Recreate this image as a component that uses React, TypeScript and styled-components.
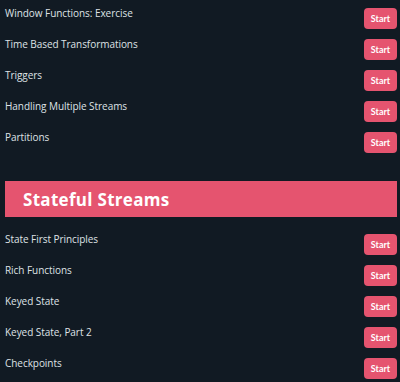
import React from 'react';
import styled, { createGlobalStyle } from 'styled-components';

const GlobalStyle = createGlobalStyle`
  html, body {
    margin: 0;
    padding: 0;
    background: #111a23;
  }
`;

const Page = styled.div`
  width: 400px;
  height: 382px;
  overflow: hidden;
  box-sizing: border-box;
  padding: 0 3px 0 5px;
  background: #111a23;
  font-family: 'Open Sans', 'Noto Sans', sans-serif;
`;

const Row = styled.div`
  display: flex;
  justify-content: space-between;
  align-items: flex-start;
  height: 31px;
`;

const Title = styled.span`
  margin-top: 6px;
  font-size: 10px;
  line-height: 14px;
  color: #dfe2e6;
  letter-spacing: -0.05px;
`;

const StartButton = styled.button`
  margin-top: 8px;
  width: 33px;
  height: 21px;
  padding: 0;
  border: none;
  border-radius: 4px;
  background: #e5546f;
  color: #fff;
  font-family: Lato, 'Open Sans', sans-serif;
  font-weight: 700;
  font-size: 9px;
  cursor: pointer;
`;

const SectionHeader = styled.h2<{ $gap: number }>`
  margin: ${(p) => p.$gap}px 0 9px 0;
  height: 36px;
  display: flex;
  align-items: center;
  padding-left: 18px;
  background: #e5546f;
  color: #fff;
  font-size: 17px;
  font-weight: 700;
  letter-spacing: 0.3px;
`;

const firstLessons = [
  'Window Functions: Exercise',
  'Time Based Transformations',
  'Triggers',
  'Handling Multiple Streams',
  'Partitions',
];

const statefulLessons = [
  'State First Principles',
  'Rich Functions',
  'Keyed State',
  'Keyed State, Part 2',
  'Checkpoints',
];

const LessonRow = ({ title }: { title: string }) => (
  <Row>
    <Title>{title}</Title>
    <StartButton>Start</StartButton>
  </Row>
);

export default function App() {
  return (
    <Page>
      <GlobalStyle />
      {firstLessons.map((t) => (
        <LessonRow key={t} title={t} />
      ))}
      <SectionHeader $gap={26}>Stateful Streams</SectionHeader>
      {statefulLessons.map((t) => (
        <LessonRow key={t} title={t} />
      ))}
    </Page>
  );
}
